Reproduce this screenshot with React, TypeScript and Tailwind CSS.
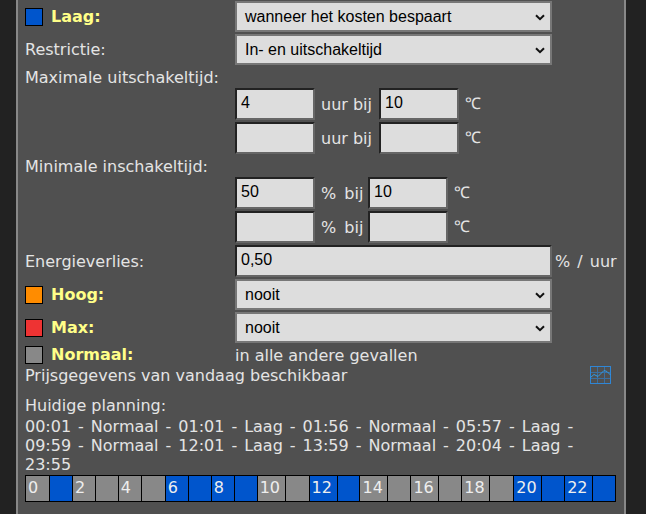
const label = "text-[16px] leading-[19px] text-[#e4e4e4]";

function Chevron() {
  return (
    <svg width="10" height="7" viewBox="0 0 10 7" className="absolute right-[5px] top-[11px]" fill="none">
      <path d="M1 1.2 L5 5.2 L9 1.2" stroke="#111" strokeWidth="2" />
    </svg>
  );
}

function Select({ value }: { value: string }) {
  return (
    <div className="relative h-[31px] w-[317px] border-2 border-[#777] bg-[#dddddd] pl-[8px] font-['Liberation_Sans',sans-serif] text-[16px] leading-[27px] text-black">
      {value}
      <Chevron />
    </div>
  );
}

function Input({ value, wide }: { value?: string; wide?: boolean }) {
  return (
    <div
      className={`h-[32px] border-2 border-t-[#222] border-l-[#222] border-r-[#666] border-b-[#666] bg-[#dddddd] pl-[4px] font-['Liberation_Sans',sans-serif] text-[16px] leading-[26px] text-black ${
        wide ? "w-[317px]" : "w-[80px]"
      }`}
    >
      {value}
    </div>
  );
}

function Swatch({ color }: { color: string }) {
  return <div className={`h-[18px] w-[18px] border border-black ${color}`} />;
}

function Level({ color, name }: { color: string; name: string }) {
  return (
    <div className="flex w-[210px] items-center gap-[8px]">
      <Swatch color={color} />
      <span className="text-[16px] font-bold text-[#ffff88]">{name}</span>
    </div>
  );
}

function PairRow({ unit, unitClass, value, second }: { unit: string; unitClass: string; value?: string; second?: string }) {
  return (
    <div className="ml-[210px] flex h-[32px] items-center">
      <Input value={value} />
      <span className={`ml-[6px] ${unitClass} ${label}`}>{unit}</span>
      <Input value={second} />
      <span className="ml-[6px] font-['Liberation_Serif',serif] text-[16px] text-[#e4e4e4]">℃</span>
    </div>
  );
}

const uur = "w-[58px]";
const pct = "w-[47px] [word-spacing:3px]";

const cells: [string, string, string][] = [
  ["0", "bg-[#888888]", "w-[23px]"],
  ["", "bg-[#0055cc]", "w-[23px]"],
  ["2", "bg-[#888888]", "w-[23px]"],
  ["", "bg-[#888888]", "w-[23px]"],
  ["4", "bg-[#888888]", "w-[23px]"],
  ["", "bg-[#888888]", "w-[24px]"],
  ["6", "bg-[#0055cc]", "w-[23px]"],
  ["", "bg-[#0055cc]", "w-[23px]"],
  ["8", "bg-[#0055cc]", "w-[23px]"],
  ["", "bg-[#0055cc]", "w-[23px]"],
  ["10", "bg-[#888888]", "w-[28px]"],
  ["", "bg-[#888888]", "w-[24px]"],
  ["12", "bg-[#0055cc]", "w-[28px]"],
  ["", "bg-[#0055cc]", "w-[23px]"],
  ["14", "bg-[#888888]", "w-[28px]"],
  ["", "bg-[#888888]", "w-[23px]"],
  ["16", "bg-[#888888]", "w-[28px]"],
  ["", "bg-[#888888]", "w-[23px]"],
  ["18", "bg-[#888888]", "w-[28px]"],
  ["", "bg-[#888888]", "w-[24px]"],
  ["20", "bg-[#0055cc]", "w-[28px]"],
  ["", "bg-[#0055cc]", "w-[23px]"],
  ["22", "bg-[#0055cc]", "w-[28px]"],
  ["", "bg-[#0055cc]", "w-[23px]"],
];

function ChartIcon() {
  return (
    <svg width="22" height="19" viewBox="0 0 22 19" fill="none" stroke="#2f86d6" strokeWidth="1">
      <path d="M7.5 0.5V17.5M14.5 0.5V17.5M0.5 6.5H20.5M0.5 12.5H20.5" stroke="#3b6fa0" />
      <rect x="0.5" y="0.5" width="20" height="17" />
      <path d="M0.5 11.5L4 8.5L8 10.5L14 4.5L17 5.5L20.5 9" stroke="#2f9be8" />
    </svg>
  );
}

export default function App() {
  return (
    <div className="h-[514px] w-[646px] overflow-hidden bg-[#222222] pl-[16px] font-['DejaVu_Sans',sans-serif]">
      <div className="h-[514px] w-[610px] border-x-2 border-x-[#888] bg-[#505050] pl-[7px] pt-px">
        <div className="flex items-center">
          <Level color="bg-[#0055cc]" name="Laag:" />
          <Select value="wanneer het kosten bespaart" />
        </div>
        <div className="mt-[2px] flex items-center">
          <div className={`w-[210px] ${label}`}>Restrictie:</div>
          <Select value="In- en uitschakeltijd" />
        </div>
        <div className={`mt-[3px] h-[20px] ${label}`}>Maximale uitschakeltijd:</div>
        <div className="flex flex-col gap-[2px]">
          <PairRow unit="uur bij" unitClass={uur} value="4" second="10" />
          <PairRow unit="uur bij" unitClass={uur} />
        </div>
        <div className={`mt-[3px] h-[20px] ${label}`}>Minimale inschakeltijd:</div>
        <div className="flex flex-col gap-[2px]">
          <PairRow unit="% bij" unitClass={pct} value="50" second="10" />
          <PairRow unit="% bij" unitClass={pct} />
        </div>
        <div className="mt-[2px] flex items-center">
          <div className={`w-[210px] ${label}`}>Energieverlies:</div>
          <Input value="0,50" wide />
          <span className={`ml-[3px] [word-spacing:2px] ${label}`}>% / uur</span>
        </div>
        <div className="mt-[2px] flex items-center">
          <Level color="bg-[#ff8c00]" name="Hoog:" />
          <Select value="nooit" />
        </div>
        <div className="mt-[2px] flex items-center">
          <Level color="bg-[#ee3333]" name="Max:" />
          <Select value="nooit" />
        </div>
        <div className="mt-[2px] flex h-[20px] items-center">
          <Level color="bg-[#888888]" name="Normaal:" />
          <span className={label}>in alle andere gevallen</span>
        </div>
        <div className="flex h-[21px] w-[587px] items-center justify-between">
          <span className={label}>Prijsgegevens van vandaag beschikbaar</span>
          <ChartIcon />
        </div>
        <div className={`mt-[10px] h-[19px] ${label}`}>Huidige planning:</div>
        <div className={`mt-[2px] w-[590px] [word-spacing:1.9px] ${label}`}>
          00:01 - Normaal - 01:01 - Laag - 01:56 - Normaal - 05:57 - Laag - 09:59 - Normaal - 12:01 - Laag - 13:59 - Normaal - 20:04 - Laag - 23:55
        </div>
        <div className="mt-[1px] flex h-[27px] w-[591px] border border-black bg-black">
          {cells.map(([text, color, width], i) => (
            <div
              key={i}
              className={`h-full ${width} ${color} ${i > 0 ? "border-l border-black" : ""} pl-[2px] text-[16px] leading-[24px] text-[#eeeeee]`}
            >
              {text}
            </div>
          ))}
        </div>
      </div>
    </div>
  );
}
